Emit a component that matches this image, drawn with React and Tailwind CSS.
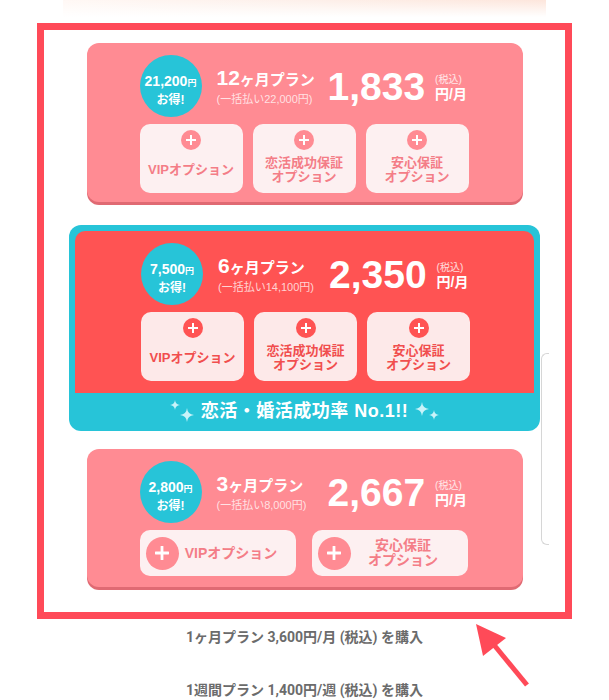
import React from 'react';

const FONT = "font-['Liberation_Sans','Noto_Sans_CJK_JP',sans-serif]";

const plans = [
  {
    id: '12m',
    save: '21,200',
    months: '12',
    lump: '(一括払い22,000円)',
    price: '1,833',
    options: [['VIPオプション'], ['恋活成功保証', 'オプション'], ['安心保証', 'オプション']],
  },
  {
    id: '6m',
    save: '7,500',
    months: '6',
    lump: '(一括払い14,100円)',
    price: '2,350',
    featured: true,
    options: [['VIPオプション'], ['恋活成功保証', 'オプション'], ['安心保証', 'オプション']],
  },
  {
    id: '3m',
    save: '2,800',
    months: '3',
    lump: '(一括払い8,000円)',
    price: '2,667',
    wide: true,
    options: [['VIPオプション'], ['安心保証', 'オプション']],
  },
];

const PlusCircle = ({ size, color, bar }) => (
  <div
    className={`${size} ${color} rounded-full flex items-center justify-center shrink-0`}
  >
    <svg width={bar} height={bar} viewBox="0 0 10 10">
      <path d="M5 0.5V9.5M0.5 5H9.5" stroke="white" strokeWidth="2" strokeLinecap="round" />
    </svg>
  </div>
);

const Sparkle = ({ s }) => (
  <svg width={s} height={s} viewBox="0 0 24 24">
    <path d="M12 0Q13 11 24 12Q13 13 12 24Q11 13 0 12Q11 11 12 0Z" fill="#c9f3f9" />
  </svg>
);

const PlanHeader = ({ plan }) => (
  <div className="flex items-center h-[62px]">
    <div className="w-[62px] h-[62px] rounded-full bg-[#27c4d8] flex flex-col items-center justify-center pt-[10px] text-white font-bold shrink-0">
      <div className="text-[14px] leading-[17px]">
        {plan.save}
        <span className="text-[9px]">円</span>
      </div>
      <div className="text-[12px] leading-[17px]">お得!</div>
    </div>
    <div className="w-[111px] ml-[15px] text-white shrink-0">
      <div className="font-bold leading-[24px] whitespace-nowrap">
        <span className="text-[21px]">{plan.months}</span>
        <span className="text-[15px]">ヶ月プラン</span>
      </div>
      <div className="text-[11px] leading-[14px] text-white/75 whitespace-nowrap">{plan.lump}</div>
    </div>
    <div className="text-white font-bold text-[39px] leading-none">{plan.price}</div>
    <div className="ml-[10px] text-white flex flex-col mt-[2px]">
      <span className="text-[10px] leading-[13px] text-white/80">(税込)</span>
      <span className="text-[14px] leading-[16px] font-bold">円/月</span>
    </div>
  </div>
);

const OptionButtons = ({ plan }) => {
  const red = plan.featured;
  const bg = red ? 'bg-[#fde9e9]' : 'bg-[#fdf0f1]';
  const txt = red ? 'text-[#f14e4e]' : 'text-[#f47d87]';
  const circ = red ? 'bg-[#ff5353]' : 'bg-[#ff8b93]';

  if (plan.wide) {
    return (
      <div className="flex gap-[16px] mt-[7px]">
        {plan.options.map((lines) => (
          <div
            key={lines.join('')}
            className={`w-[156px] h-[46px] rounded-[10px] ${bg} flex items-center pl-[6px]`}
          >
            <PlusCircle size="w-[33px] h-[33px]" color={circ} bar={14} />
            <div className={`flex-1 pr-[12px] text-center font-bold ${txt} text-[14px] leading-[15px]`}>
              {lines.map((l) => (
                <div key={l}>{l}</div>
              ))}
            </div>
          </div>
        ))}
      </div>
    );
  }

  return (
    <div className="flex gap-[10px] mt-[7px]">
      {plan.options.map((lines) => (
        <div
          key={lines.join('')}
          className={`w-[103px] h-[69px] rounded-[10px] ${bg} flex flex-col items-center pt-[6px]`}
        >
          <PlusCircle size="w-[20px] h-[20px]" color={circ} bar={10} />
          <div
            className={`flex-1 flex flex-col items-center justify-center pb-[4px] font-bold ${txt} text-[13px] leading-[14px]`}
          >
            {lines.map((l) => (
              <div key={l}>{l}</div>
            ))}
          </div>
        </div>
      ))}
    </div>
  );
};

const PinkCard = ({ plan, className }) => (
  <div
    className={`w-[436px] ${plan.wide ? 'h-[138px]' : 'h-[159px]'} rounded-[12px] bg-[#ff8b93] shadow-[0_3px_0_#e06a73] pt-[12px] pl-[53px] ${className}`}
  >
    <PlanHeader plan={plan} />
    <OptionButtons plan={plan} />
  </div>
);

const FeaturedCard = ({ plan, className }) => (
  <div className={`w-[471px] h-[206px] rounded-[12px] bg-[#27c4d8] pt-[6px] px-[6px] flex flex-col ${className}`}>
    <div className="h-[162px] rounded-t-[10px] bg-[#ff5353] pt-[12px] pl-[66px]">
      <PlanHeader plan={plan} />
      <OptionButtons plan={plan} />
    </div>
    <div className="flex-1 flex items-center justify-center gap-[7px] pb-[2px]">
      <div className="flex items-start">
        <Sparkle s={10} />
        <div className="mt-[8px]">
          <Sparkle s={14} />
        </div>
      </div>
      <span className="text-white font-bold text-[18px] leading-none tracking-[0.5px]">
        恋活・婚活成功率 No.1!!
      </span>
      <div className="flex items-start">
        <Sparkle s={14} />
        <div className="mt-[8px]">
          <Sparkle s={10} />
        </div>
      </div>
    </div>
  </div>
);

export default function App() {
  return (
    <div className={`relative w-[609px] h-[700px] bg-white overflow-hidden ${FONT}`}>
      {/* faded banner above */}
      <div className="ml-[63px] w-[483px] h-[17px] bg-linear-to-r from-[#fff8f5] via-[#fdf0ea] to-[#fde6dc]">
        <div className="h-full bg-linear-to-b from-transparent to-white" />
      </div>

      {/* highlight frame */}
      <div className="ml-[37px] mt-[6px] w-[535px] h-[596px] border-[7px] border-[#ff4a58] pt-[13px] flex flex-col items-center">
        <PinkCard plan={plans[0]} />
        <FeaturedCard plan={plans[1]} className="mt-[23px]" />
        <PinkCard plan={plans[2]} className="mt-[18px]" />
      </div>

      {/* other plans */}
      <div className="flex flex-col items-center text-[#6b6b6b] font-bold text-[14px] leading-[20px] font-['Roboto','Noto_Sans_CJK_JP',sans-serif]">
        <div className="mt-[8px]">1ヶ月プラン 3,600円/月 (税込) を購入</div>
        <div className="mt-[33px]">1週間プラン 1,400円/週 (税込) を購入</div>
      </div>

      {/* partially hidden panel edge */}
      <div className="absolute left-[541px] top-[353px] w-[8px] h-[192px] border-l border-t border-b border-[#d6d6d6] rounded-l-[6px]" />

      {/* pointer arrow */}
      <svg className="absolute left-0 top-0" width="609" height="700">
        <line x1="527" y1="685" x2="490" y2="640" stroke="#ff4a58" strokeWidth="5" />
        <polygon points="476,624 506,638 483,656" fill="#ff4a58" />
      </svg>
    </div>
  );
}
